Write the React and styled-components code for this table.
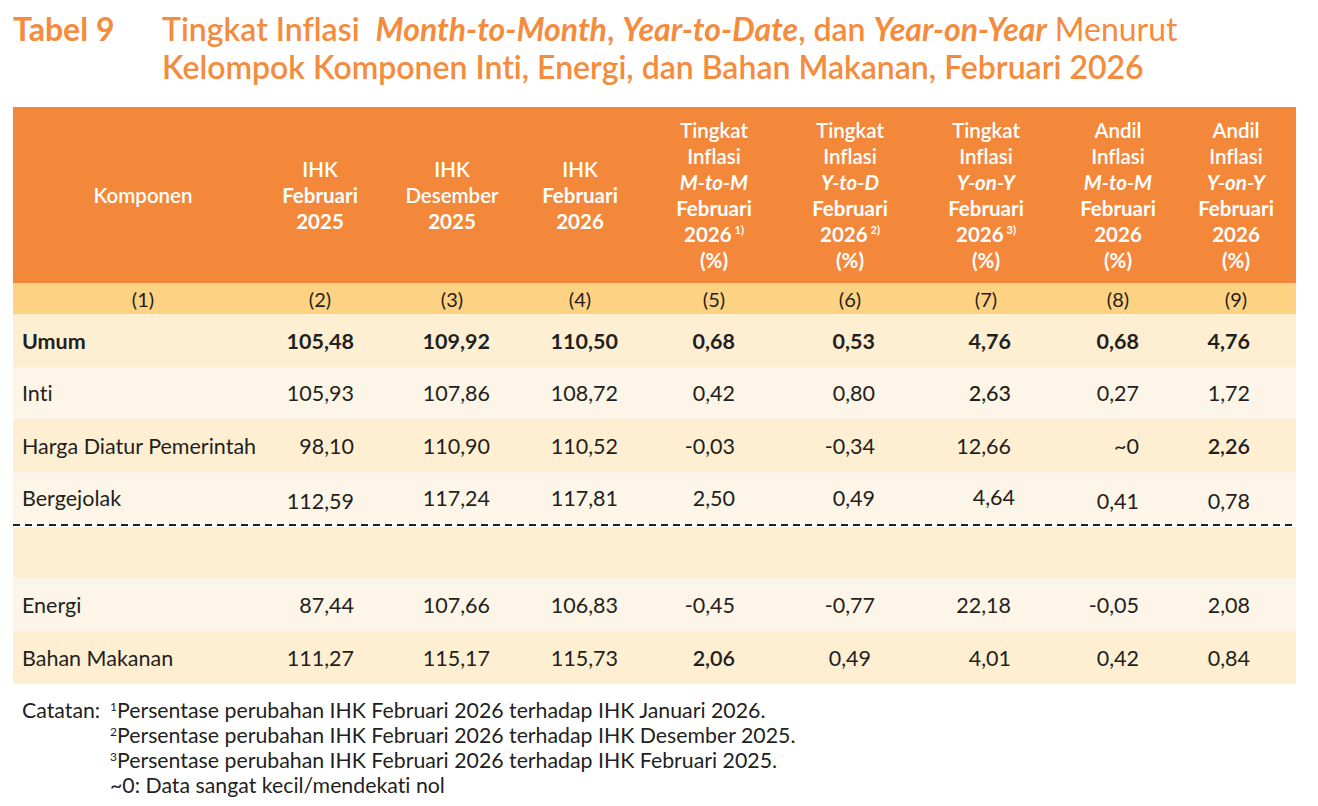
import styled, { createGlobalStyle } from "styled-components";

const GlobalStyle = createGlobalStyle`
  body {
    margin: 0;
    background: #ffffff;
    font-family: Lato, "Open Sans", sans-serif;
    font-variant-ligatures: no-common-ligatures;
    color: #231f20;
  }
`;

const Page = styled.div`
  width: 1283px;
  padding: 10px 0 0 13px;
`;

const TitleBlock = styled.div`
  display: grid;
  grid-template-columns: 149px 1fr;
  color: #f58b3c;
  font-size: 32px;
  line-height: 38px;
  font-weight: 600;
  white-space: nowrap;
`;

const TitleLabel = styled.div`
  font-weight: 700;
`;

const TitleText = styled.div``;

const Em = styled.span`
  font-style: ${(p) => (p.$italic ? "italic" : "normal")};
  font-weight: ${(p) => p.$weight || 600};
`;

const Table = styled.div`
  margin-top: 21px;
  display: grid;
  grid-template-columns: 243px 128px 136px 120px 148px 124px 148px 116px 120px;
`;

const HeadCell = styled.div`
  height: 176px;
  background: #f4883a;
  color: #ffffff;
  display: flex;
  flex-direction: column;
  align-items: center;
  justify-content: center;
  font-size: 20.5px;
  line-height: 26px;
  padding-left: ${(p) => p.$pl || 0}px;
  white-space: nowrap;
`;

const HeadLine = styled.span`
  font-weight: ${(p) => p.$weight || 700};
  font-style: ${(p) => (p.$italic ? "italic" : "normal")};
`;

const Sup = styled.sup`
  font-size: 11px;
  line-height: 0;
  vertical-align: 8px;
  margin-left: 3px;
`;

const NumCell = styled.div`
  height: 31px;
  background: #fdd283;
  display: flex;
  align-items: center;
  justify-content: center;
  font-size: 20px;
  padding-left: ${(p) => p.$pl || 0}px;
`;

const Cell = styled.div`
  height: ${(p) => p.$h}px;
  background: ${(p) => (p.$shade ? "#feefd2" : "#fdf5e7")};
  display: flex;
  align-items: center;
  justify-content: ${(p) => (p.$first ? "flex-start" : "flex-end")};
  padding-top: ${(p) => Math.max(0, (p.$drop || 0) * 2)}px;
  padding-bottom: ${(p) => Math.max(0, -(p.$drop || 0) * 2)}px;
  padding-right: ${(p) => p.$pr}px;
  padding-left: ${(p) => (p.$first ? 9 : 0)}px;
  box-sizing: border-box;
  white-space: nowrap;
  font-size: 21.5px;
  font-weight: ${(p) => p.$weight || 400};
`;

const DashRow = styled.div`
  grid-column: 1 / -1;
  height: 4px;
  background: #ffffff;
  display: flex;
  align-items: center;
`;

const Dash = styled.div`
  width: 100%;
  height: 2.5px;
  background: repeating-linear-gradient(
    to right,
    #231f20 0 7px,
    transparent 7px 12px
  );
`;

const Notes = styled.div`
  margin-top: 14px;
  padding-left: 9px;
  display: grid;
  grid-template-columns: 88px 1fr;
  font-size: 21.3px;
  line-height: 25px;
  white-space: nowrap;
`;

const NoteSup = styled.sup`
  font-size: 12px;
  line-height: 0;
  vertical-align: 7px;
`;

const columns = [
  { pr: 0, head: [{ t: "Komponen", w: 600 }], pl: 17 },
  { pr: 30, head: [{ t: "IHK", w: 600 }, { t: "Februari" }, { t: "2025" }] },
  { pr: 30, head: [{ t: "IHK", w: 600 }, { t: "Desember", w: 600 }, { t: "2025" }] },
  { pr: 22, head: [{ t: "IHK", w: 600 }, { t: "Februari" }, { t: "2026" }] },
  {
    pr: 53,
    head: [
      { t: "Tingkat", w: 600 },
      { t: "Inflasi", w: 600 },
      { t: "M-to-M", i: true },
      { t: "Februari" },
      { t: "2026", sup: "1)" },
      { t: "(%)" },
    ],
  },
  {
    pr: 37,
    head: [
      { t: "Tingkat", w: 600 },
      { t: "Inflasi", w: 600 },
      { t: "Y-to-D", i: true },
      { t: "Februari" },
      { t: "2026", sup: "2)" },
      { t: "(%)" },
    ],
  },
  {
    pr: 49,
    head: [
      { t: "Tingkat", w: 600 },
      { t: "Inflasi", w: 600 },
      { t: "Y-on-Y", i: true },
      { t: "Februari" },
      { t: "2026", sup: "3)" },
      { t: "(%)" },
    ],
  },
  {
    pr: 37,
    head: [
      { t: "Andil", w: 600 },
      { t: "Inflasi", w: 600 },
      { t: "M-to-M", i: true },
      { t: "Februari" },
      { t: "2026" },
      { t: "(%)" },
    ],
  },
  {
    pr: 46,
    head: [
      { t: "Andil", w: 600 },
      { t: "Inflasi", w: 600 },
      { t: "Y-on-Y", i: true },
      { t: "Februari" },
      { t: "2026" },
      { t: "(%)" },
    ],
  },
];

// cell: string, or { v, w (weight), drop (shift down), dr (px shift right) }
const topRows = [
  {
    label: "Umum",
    bold: true,
    h: 53,
    shade: true,
    cells: ["105,48", "109,92", "110,50", "0,68", "0,53", "4,76", "0,68", "4,76"],
  },
  {
    label: "Inti",
    h: 52,
    cells: ["105,93", "107,86", "108,72", "0,42", "0,80", { v: "2,63", w: 500 }, "0,27", "1,72"],
  },
  {
    label: "Harga Diatur Pemerintah",
    h: 53,
    shade: true,
    cells: ["98,10", "110,90", "110,52", "-0,03", "-0,34", "12,66", "~0", { v: "2,26", w: 600 }],
  },
  {
    label: "Bergejolak",
    h: 51,
    cells: [
      { v: "112,59", drop: 3 },
      "117,24",
      "117,81",
      "2,50",
      "0,49",
      { v: "4,64", drop: -1, dr: 4 },
      { v: "0,41", drop: 3 },
      { v: "0,78", drop: 3 },
    ],
  },
];

const bottomRows = [
  { label: "", h: 51, shade: true, cells: ["", "", "", "", "", "", "", ""] },
  {
    label: "Energi",
    h: 53,
    cells: ["87,44", "107,66", "106,83", "-0,45", "-0,77", "22,18", "-0,05", "2,08"],
  },
  {
    label: "Bahan Makanan",
    h: 53,
    shade: true,
    cells: ["111,27", "115,17", "115,73", { v: "2,06", w: 600 }, { v: "0,49", dr: -4 }, "4,01", "0,42", "0,84"],
  },
];

function DataRow({ row }) {
  return (
    <>
      <Cell $first $h={row.h} $shade={row.shade} $pr={0} $weight={row.bold ? 700 : 400}>
        {row.label}
      </Cell>
      {row.cells.map((c, i) => {
        const cell = typeof c === "string" ? { v: c } : c;
        return (
          <Cell
            key={i}
            $h={row.h}
            $shade={row.shade}
            $pr={columns[i + 1].pr - (cell.dr || 0)}
            $drop={cell.drop}
            $weight={row.bold ? 700 : cell.w}
          >
            {cell.v}
          </Cell>
        );
      })}
    </>
  );
}

export default function App() {
  return (
    <Page>
      <GlobalStyle />
      <TitleBlock>
        <TitleLabel>Tabel 9</TitleLabel>
        <TitleText>
          Tingkat Inflasi&nbsp;{" "}
          <Em $italic $weight={700}>Month-to-Month</Em>
          <Em $weight={600}>, </Em>
          <Em $italic $weight={700}>Year-to-Date</Em>
          <Em $weight={600}>, dan </Em>
          <Em $italic $weight={700}>Year-on-Year</Em>{" "}
          <Em $weight={400}>Menurut</Em>
          <br />
          Kelompok Komponen Inti, Energi, dan Bahan Makanan, Februari 2026
        </TitleText>
      </TitleBlock>

      <Table>
        {columns.map((col, i) => (
          <HeadCell key={i} $pl={col.pl}>
            {col.head.map((l, j) => (
              <HeadLine key={j} $weight={l.w} $italic={l.i}>
                {l.t}
                {l.sup && <Sup>{l.sup}</Sup>}
              </HeadLine>
            ))}
          </HeadCell>
        ))}
        {columns.map((col, i) => (
          <NumCell key={i} $pl={col.pl}>
            ({i + 1})
          </NumCell>
        ))}
        {topRows.map((r) => (
          <DataRow key={r.label} row={r} />
        ))}
        <DashRow>
          <Dash />
        </DashRow>
        {bottomRows.map((r, i) => (
          <DataRow key={i} row={r} />
        ))}
      </Table>

      <Notes>
        <span>Catatan:</span>
        <div>
          <NoteSup>1</NoteSup>Persentase perubahan IHK Februari 2026 terhadap IHK Januari 2026.
          <br />
          <NoteSup>2</NoteSup>Persentase perubahan IHK Februari 2026 terhadap IHK Desember 2025.
          <br />
          <NoteSup>3</NoteSup>Persentase perubahan IHK Februari 2026 terhadap IHK Februari 2025.
          <br />
          ~0: Data sangat kecil/mendekati nol
        </div>
      </Notes>
    </Page>
  );
}
